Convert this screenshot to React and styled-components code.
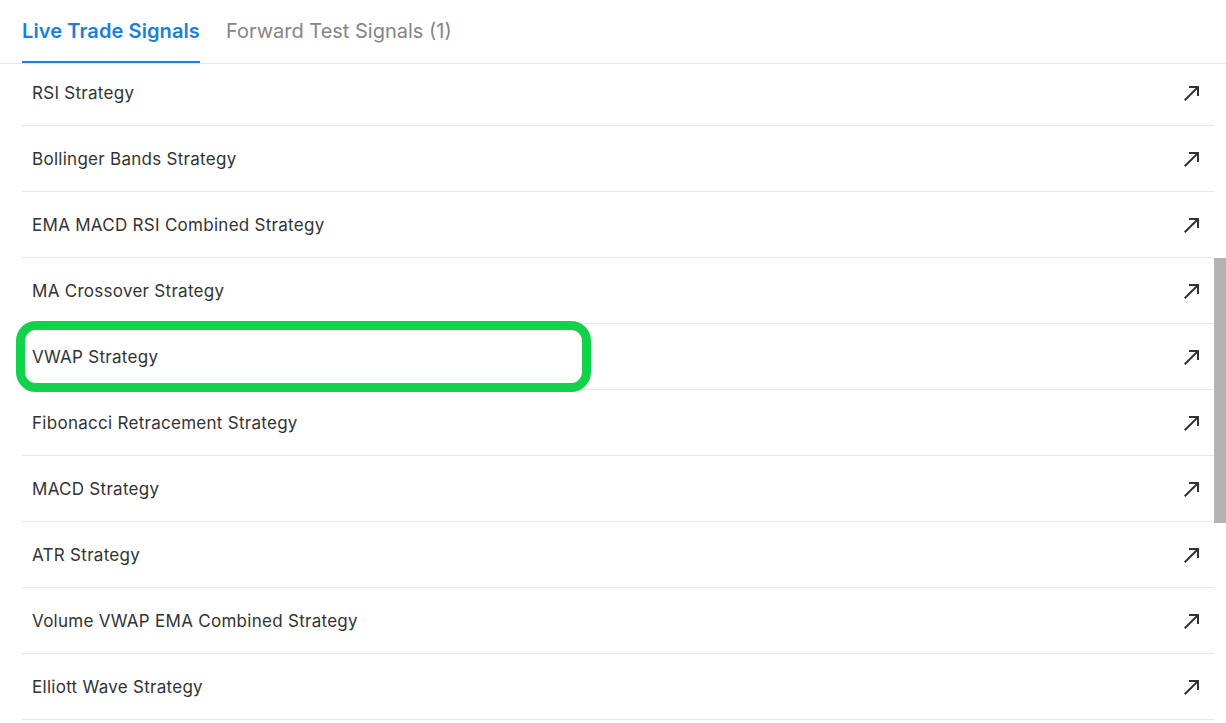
import React, { useEffect, useRef } from "react";
import styled, { createGlobalStyle } from "styled-components";

const Global = createGlobalStyle`
  html, body { margin: 0; padding: 0; background: #fff; }
  body { font-family: Inter, "Noto Sans", sans-serif; overflow: hidden; }
  * { box-sizing: border-box; }
`;

const Page = styled.div`
  display: flex;
  flex-direction: column;
  width: 1226px;
  height: 723px;
  overflow: hidden;
  background: #fff;
`;

const Header = styled.div`
  display: flex;
  align-items: stretch;
  gap: 26px;
  height: 64px;
  padding-left: 22px;
  border-bottom: 1px solid #e6e6e6;
  flex-shrink: 0;
`;

const Tab = styled.div`
  display: flex;
  align-items: center;
  height: 63px;
  font-size: 20px;
  font-weight: ${(p) => (p.$active ? 600 : 400)};
  color: ${(p) => (p.$active ? "#1a7fdb" : "#858585")};
  border-bottom: 2px solid ${(p) => (p.$active ? "#1a7fdb" : "transparent")};
  letter-spacing: ${(p) => (p.$active ? "0.1px" : "0")};
`;

const Body = styled.div`
  display: flex;
  flex: 1;
  min-height: 0;
`;

const List = styled.div`
  flex: 1;
  height: 100%;
  overflow-y: auto;
  scrollbar-width: none;
  &::-webkit-scrollbar { display: none; }
  padding: 0 0 20px 22px;
`;

const Row = styled.div`
  position: relative;
  display: flex;
  align-items: center;
  justify-content: space-between;
  height: 66px;
  padding: 0 10px;
  border-bottom: 1px solid #e8e8e8;
`;

const Name = styled.span`
  font-size: 17px;
  letter-spacing: 0.28px;
  color: #333;
`;

const Icon = styled.svg`
  width: 24px;
  height: 24px;
  fill: #333;
  flex-shrink: 0;
`;

const Highlight = styled.div`
  position: absolute;
  left: -6px;
  top: -3px;
  width: 575px;
  height: 71px;
  border: 9px solid #12d14b;
  border-radius: 20px;
  pointer-events: none;
`;

const Track = styled.div`
  width: 12px;
  flex-shrink: 0;
  display: flex;
  flex-direction: column;
`;

const Thumb = styled.div`
  margin-top: 194px;
  height: 265px;
  background: #b3b3b3;
`;

const strategies = [
  "RSI Strategy",
  "Bollinger Bands Strategy",
  "EMA MACD RSI Combined Strategy",
  "MA Crossover Strategy",
  "VWAP Strategy",
  "Fibonacci Retracement Strategy",
  "MACD Strategy",
  "ATR Strategy",
  "Volume VWAP EMA Combined Strategy",
  "Elliott Wave Strategy",
];

const NorthEast = () => (
  <Icon viewBox="0 0 24 24">
    <path d="M9 5v2h6.59L4 18.59 5.41 20 17 8.41V15h2V5z" />
  </Icon>
);

export default function App() {
  const listRef = useRef(null);
  useEffect(() => {
    if (listRef.current) listRef.current.scrollTop = 4;
  }, []);
  return (
    <>
      <Global />
      <Page>
        <Header>
          <Tab $active>Live Trade Signals</Tab>
          <Tab>Forward Test Signals (1)</Tab>
        </Header>
        <Body>
          <List ref={listRef}>
            {strategies.map((s) => (
              <Row key={s}>
                <Name>{s}</Name>
                <NorthEast />
                {s === "VWAP Strategy" && <Highlight />}
              </Row>
            ))}
          </List>
          <Track>
            <Thumb />
          </Track>
        </Body>
      </Page>
    </>
  );
}
